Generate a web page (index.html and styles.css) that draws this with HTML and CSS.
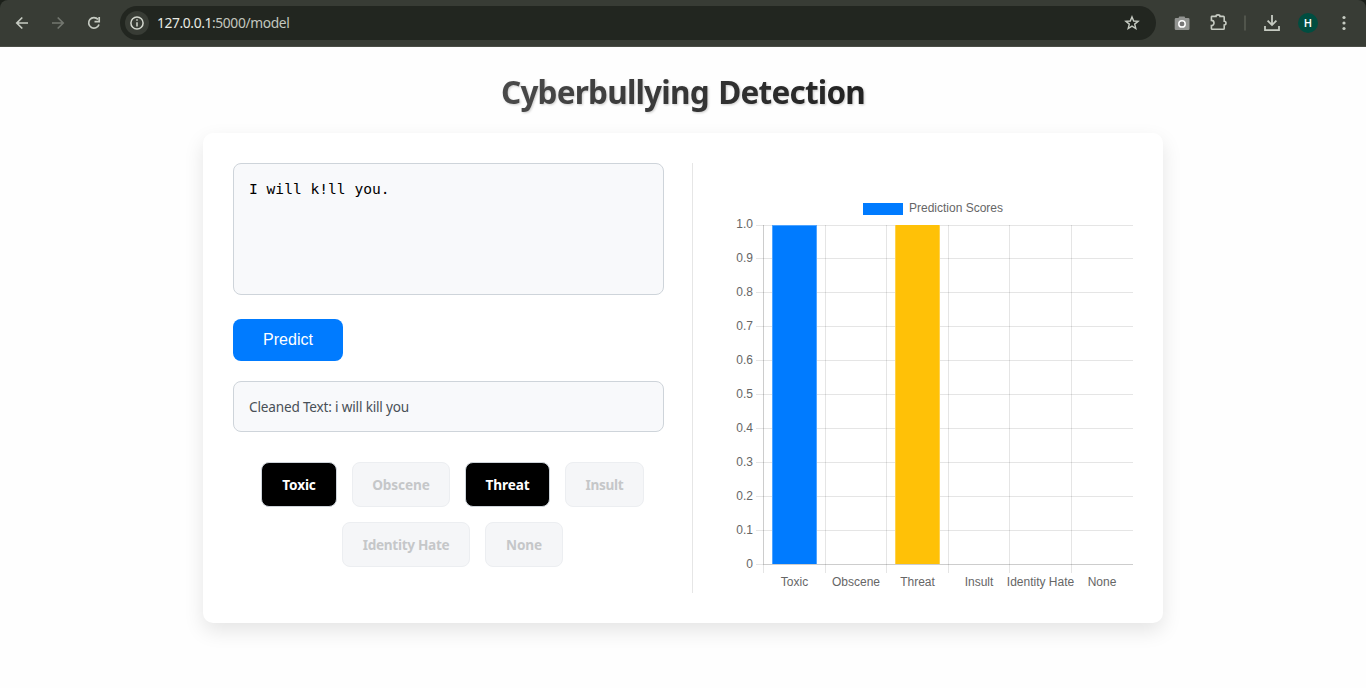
FILE: index.html
```html
<!DOCTYPE html>
<html lang="en">
<head>
<meta charset="utf-8">
<title>Cyberbullying Detection</title>
<link rel="stylesheet" href="styles.css">
</head>
<body>
<header class="frame">
  <div class="toolbar">
    <svg class="nav" width="110" height="46" viewBox="0 0 110 46" fill="none" stroke-width="1.7">
      <path d="M28 23H17M22.3 17.5L16.8 23L22.3 28.5" stroke="#c6cbc2"/>
      <path d="M52 23H63M57.7 17.5L63.2 23L57.7 28.5" stroke="#73776f"/>
      <path d="M98 19.4A5.3 5.3 0 1 0 99 24.5" stroke="#c6cbc2"/>
      <path d="M99.2 17V21.7H94.5" stroke="#c6cbc2"/>
    </svg>
    <div class="omnibox">
      <span class="site-info">
        <svg width="24" height="24" viewBox="0 0 24 24" fill="none" stroke="#d3d7ce" stroke-width="1.5"><circle cx="12" cy="12" r="6.1"/><path d="M12 11.2V15.4M12 8.3V9.8"/></svg>
      </span>
      <span class="url">127.0.0.1<span class="path">:5000/model</span></span>
      <svg class="star" width="16" height="16" viewBox="0 0 16 16" fill="none" stroke="#c6cbc2" stroke-width="1.4"><path d="M8 1.9L9.7 6L14.1 6.3L10.7 9.1L11.8 13.5L8 11.1L4.2 13.5L5.3 9.1L1.9 6.3L6.3 6Z"/></svg>
    </div>
    <svg class="actions" width="210" height="46" viewBox="0 0 210 46">
      <path d="M20 18H22.5L23.2 16.5H28.5L29.3 18H32.2Q33.5 18 33.5 19.3V28.7Q33.5 30 32.2 30H20Q18.7 30 18.7 28.7V19.3Q18.7 18 20 18Z" fill="#929491"/>
      <circle cx="26" cy="23.9" r="3.2" fill="#777" stroke="#fff" stroke-width="1.5"/>
      <path d="M55.8 16.4H60A2 1.5 0 0 1 64 16.4H67.4Q68.2 16.4 68.2 17.2V21.2A1.8 1.9 0 0 1 68.2 25V28.4Q68.2 29.3 67.4 29.3H56.2Q55.4 29.3 55.4 28.5V25.6A2.6 2.6 0 0 0 55.4 20.4V16.8Z" fill="none" stroke="#c6cbc2" stroke-width="1.6"/>
      <path d="M89 15.5V30.5" stroke="#5a5e55" stroke-width="1.5"/>
      <path d="M116 15V25M111.6 20.7L116 25.1L120.4 20.7M109 26V30.1H123V26" fill="none" stroke="#c6cbc2" stroke-width="1.8"/>
      <circle cx="152" cy="23" r="10" fill="#004d40"/>
      <text class="initial" x="152" y="27" text-anchor="middle">H</text>
      <g fill="#c6cbc2"><circle cx="188" cy="17.5" r="1.6"/><circle cx="188" cy="23" r="1.6"/><circle cx="188" cy="28.5" r="1.6"/></g>
    </svg>
  </div>
</header>
<main class="page">
  <h1 class="title">Cyberbullying Detection</h1>
  <section class="card">
    <div class="input-side">
      <textarea class="message" spellcheck="false">I will k!ll you.</textarea>
      <button class="predict">Predict</button>
      <div class="cleaned">Cleaned Text: i will kill you</div>
      <div class="tags">
        <span class="tag toxic active">Toxic</span>
        <span class="tag obscene">Obscene</span>
        <span class="tag threat active">Threat</span>
        <span class="tag insult">Insult</span>
        <span class="tag identity">Identity Hate</span>
        <span class="tag none">None</span>
      </div>
    </div>
    <div class="chart-side">
      <svg class="chart" width="411" height="400" viewBox="0 0 411 400">
        <rect x="141" y="10" width="40" height="12" fill="#007bff"/>
        <text x="187" y="19">Prediction Scores</text>
        <g stroke="#000" stroke-opacity=".1">
          <path d="M34 32.5H411M34 65.5H411M34 99.5H411M34 133.5H411M34 167.5H411M34 201.5H411M34 235.5H411M34 269.5H411M34 303.5H411M34 337.5H411M34 371.5H411"/>
          <path d="M41.5 32V380M103.5 32V380M164.5 32V380M226.5 32V380M287.5 32V380M349.5 32V380"/>
          <path d="M41.5 32V371M41 371.5H411"/>
        </g>
        <g>
          <rect x="50" y="32" width="45" height="339" fill="#4da3ff"/>
          <rect x="51" y="33" width="43" height="338" fill="#007bff"/>
          <rect x="173" y="32" width="45" height="339" fill="#ffd24d"/>
          <rect x="174" y="32" width="43" height="339" fill="#ffc107"/>
        </g>
        <g text-anchor="end">
          <text x="31" y="35">1.0</text><text x="31" y="69">0.9</text><text x="31" y="103">0.8</text><text x="31" y="137">0.7</text><text x="31" y="171">0.6</text><text x="31" y="205">0.5</text><text x="31" y="239">0.4</text><text x="31" y="273">0.3</text><text x="31" y="307">0.2</text><text x="31" y="341">0.1</text><text x="31" y="375">0</text>
        </g>
        <g text-anchor="middle">
          <text x="72.5" y="393">Toxic</text><text x="134" y="393">Obscene</text><text x="195.5" y="393">Threat</text><text x="257" y="393">Insult</text><text x="318.5" y="393">Identity Hate</text><text x="380" y="393">None</text>
        </g>
      </svg>
    </div>
  </section>
</main>
</body>
</html>
```
FILE: styles.css
```css
* { box-sizing: border-box; }
body { margin: 0; height: 688px; overflow: hidden; background: #fefefe; font-family: "Noto Sans", "Open Sans", sans-serif; }
.frame { height: 47px; background: #1c201a; }
.toolbar { height: 47px; display: flex; background: #383c35; border-bottom: 1px solid #4a4d46; border-radius: 8px 8px 0 0; }
.nav { flex: none; }
.omnibox { margin: 6px 0 0 10px; width: 1036px; height: 34px; border-radius: 17px; background: #222620; display: flex; align-items: center; padding: 0 16px 0 5px; }
.site-info { width: 24px; height: 24px; border-radius: 50%; background: #383c35; }
.url { margin-left: 8px; flex: 1; font-size: 13.8px; line-height: 20px; letter-spacing: -.38px; color: #e8ebe4; }
.path { color: #c3c7bf; }
.initial { font: 500 11px Roboto, sans-serif; fill: #fff; }
.page { display: flex; flex-direction: column; align-items: center; }
.title { margin: 22px 0 19px; height: 45px; line-height: 45px; font-size: 31.5px; font-weight: 700; letter-spacing: -.78px; word-spacing: 2px; white-space: nowrap; color: transparent; background: linear-gradient(90deg, #4a4a4a, #222); background-clip: text; -webkit-background-clip: text; filter: drop-shadow(1px 1px 1px rgba(0,0,0,.2)); }
.card { width: 960px; height: 490px; padding: 30px; display: flex; background: #fff; border-radius: 10px; box-shadow: 0 8px 20px rgba(0,0,0,.1); }
.input-side { width: 431px; display: flex; flex-direction: column; }
.message { width: 100%; height: 132px; padding: 15px; resize: none; border: 1px solid #ced4da; border-radius: 8px; background: #f8f9fb; color: #000; font: 14.6px/20px "DejaVu Sans Mono", monospace; outline: none; }
.predict { margin-top: 24px; width: 110px; height: 42px; border: 0; border-radius: 8px; background: #007bff; color: #fff; font: 16px "Liberation Sans", Arial, sans-serif; padding: 0; }
.cleaned { margin-top: 20px; height: 51px; padding: 0 15px; border: 1px solid #ced4da; border-radius: 8px; background: #f8f9fb; color: #495057; font-size: 13.6px; line-height: 50px; letter-spacing: -.18px; }
.tags { margin-top: 30px; padding-left: 7px; display: flex; flex-wrap: wrap; justify-content: center; gap: 15px; }
.tag { height: 45px; padding-left: 1px; display: flex; align-items: center; justify-content: center; border: 1px solid #ced4da; border-radius: 8px; font-size: 13.6px; font-weight: 700; letter-spacing: -.1px; white-space: nowrap; background: #f5f6f8; border-color: #eceef1; color: #c5c7c9; }
.tag.active { background: #000; border-color: #ced4da; color: #fff; }
.toxic { width: 76px; }
.obscene { width: 98px; }
.threat { width: 85px; }
.insult { width: 79px; letter-spacing: -.3px; }
.identity { width: 128px; letter-spacing: -.3px; }
.none { width: 78px; }
.chart-side { margin-left: 28px; width: 441px; border-left: 1px solid #e6e6e6; padding: 30px 0 0 29px; }
.chart { display: block; }
.chart text { font: 12px "Liberation Sans", Arial, sans-serif; fill: #666; }
```
